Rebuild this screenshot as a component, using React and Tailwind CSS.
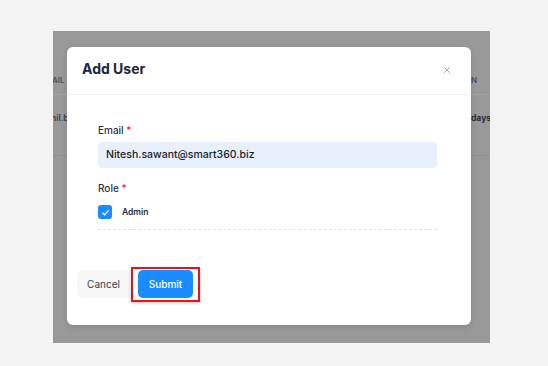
export default function App() {
  return (
    <div
      className="w-[548px] h-[366px] bg-[#f4f4f4] pt-[31px] pl-[53px]"
      style={{ fontFamily: "Inter, 'Noto Sans', sans-serif" }}
    >
      <div className="relative w-[437px] h-[312px] bg-[#999999] overflow-hidden">
        {/* faded table behind */}
        <div className="flex flex-col text-[#4a4f5c]">
          <div className="h-[64px] flex items-end pb-[8px] justify-between border-b border-[#a3a3a3] text-[8px] font-semibold">
            <span className="ml-[-1px]">AIL</span>
            <span className="mr-[13px]">IN</span>
          </div>
          <div className="h-[61px] flex justify-between pt-[17px] border-b border-[#8f8f8f] text-[8.5px] font-semibold text-[#3a3d45]">
            <span className="ml-[-2px]">nil.b</span>
            <span className="mr-[-8px] font-bold text-[#2a2d35]">days a</span>
          </div>
        </div>

        {/* modal */}
        <div className="absolute left-[14px] top-[16px] w-[404px] h-[278px] bg-white rounded-[6px] shadow-[0_2px_6px_rgba(0,0,0,0.12)] flex flex-col">
          <div className="h-[48px] border-b border-[#f0f0f0] flex items-start justify-between pl-[15px] pr-[20px] pt-[13px]">
            <span className="text-[14px] leading-[17px] font-bold text-[#1c2541]">Add User</span>
            <svg width="8" height="8" viewBox="0 0 8 8" className="mt-[6px]">
              <path d="M1 1L7 7M7 1L1 7" stroke="#a9b0c0" strokeWidth="1" />
            </svg>
          </div>
          <div className="pl-[31px] pr-[34px] pt-[29px] flex flex-col">
            <div className="text-[10px] leading-[12px] text-[#2f3340] font-medium">
              Email <span className="text-[#f5222d]">*</span>
            </div>
            <div className="mt-[6px] h-[26px] bg-[#e8f0fe] rounded-[4px] flex items-center pl-[8px] text-[10.5px] font-medium text-[#1a1d2b]">
              Nitesh.sawant@smart360.biz
            </div>
            <div className="mt-[14px] text-[10px] leading-[12px] text-[#2f3340] font-medium">
              Role <span className="text-[#f5222d]">*</span>
            </div>
            <div className="mt-[11px] flex items-center">
              <div className="w-[14px] h-[14px] rounded-[3px] bg-[#1a8cff] flex items-center justify-center">
                <svg width="9" height="9" viewBox="0 0 9 9">
                  <path d="M1.5 4.8L3.6 6.8L7.6 2.4" stroke="#fff" strokeWidth="1.2" fill="none" />
                </svg>
              </div>
              <span className="ml-[10px] text-[8.5px] font-semibold text-[#2a2d38]">Admin</span>
            </div>
            <div className="mt-[10px] border-t border-dashed border-[#e3e3e3]"></div>
          </div>
          <div className="mt-auto mb-[27px] pl-[10px] flex items-center">
            <div className="w-[53px] h-[28px] rounded-[5px] bg-[#f7f7f7] flex items-center justify-center text-[10px] text-[#3a3d48]">
              Cancel
            </div>
            <div className="ml-[8px] relative">
              <div className="absolute left-[-7px] right-[-7px] top-[-3px] bottom-[-4px] border-2 border-[#e4141b] shadow-[0_1px_3px_rgba(0,0,0,0.25)]"></div>
              <div className="relative w-[55px] h-[28px] rounded-[5px] bg-[#1a8cff] flex items-center justify-center text-[10px] font-medium text-white">
                Submit
              </div>
            </div>
          </div>
        </div>
      </div>
    </div>
  );
}
